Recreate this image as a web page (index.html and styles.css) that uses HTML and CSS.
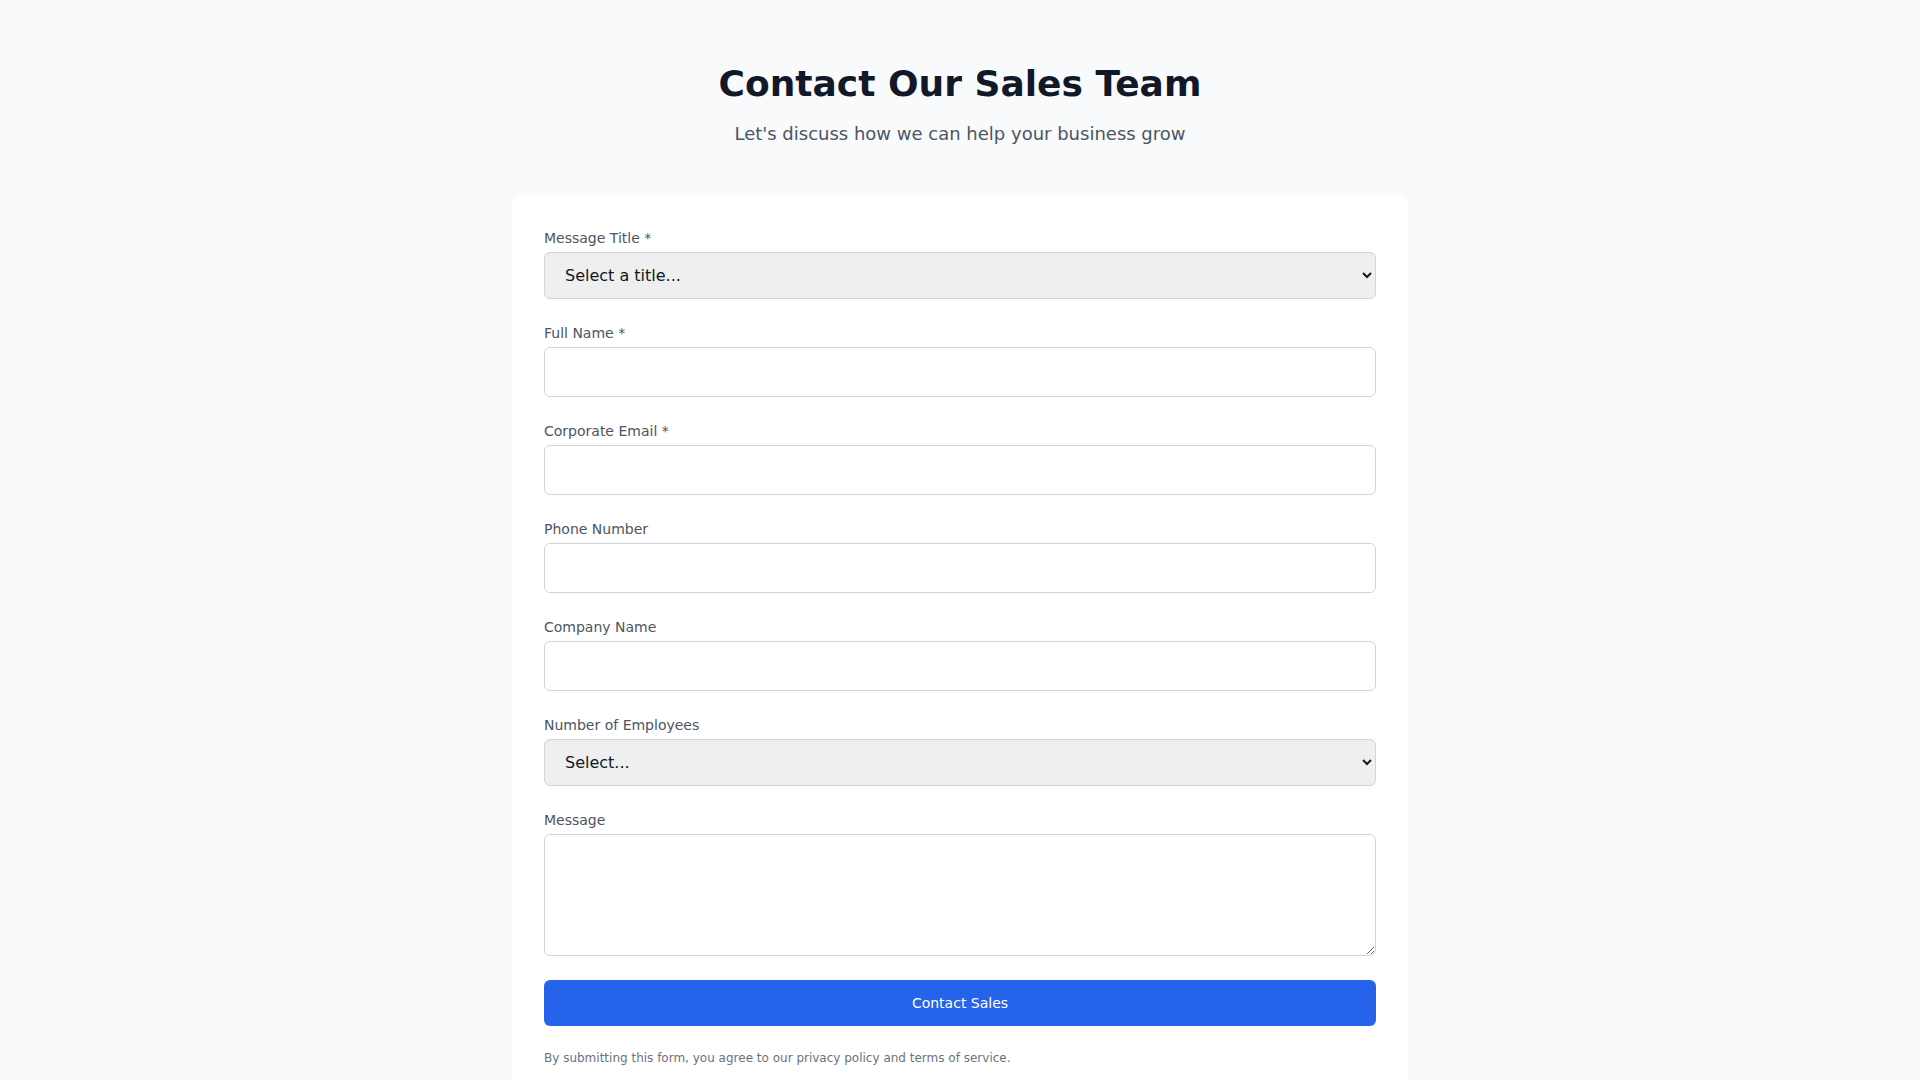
FILE: index.html
```html
<!DOCTYPE html>
<html lang="en">
<head>
    <meta charset="UTF-8">
    <meta name="viewport" content="width=device-width, initial-scale=1.0">
    <title>Contact Sales</title>
    <link rel="stylesheet" href="styles.css">
</head>
<body>
    <div class="page">
        <header class="intro">
            <h1>Contact Our Sales Team</h1>
            <p>Let's discuss how we can help your business grow</p>
        </header>

        <form class="card" id="salesForm">
            <div class="field">
                <label for="title">Message Title *</label>
                <select id="title" name="title" required>
                    <option value="">Select a title...</option>
                    <option>Product Demo</option>
                    <option>Pricing Inquiry</option>
                    <option>Partnership</option>
                </select>
            </div>

            <div class="field">
                <label for="name">Full Name *</label>
                <input type="text" id="name" name="name" required>
            </div>

            <div class="field">
                <label for="email">Corporate Email *</label>
                <input type="email" id="email" name="email" required>
            </div>

            <div class="field">
                <label for="phone">Phone Number</label>
                <input type="tel" id="phone" name="phone">
            </div>

            <div class="field">
                <label for="company">Company Name</label>
                <input type="text" id="company" name="company">
            </div>

            <div class="field">
                <label for="employees">Number of Employees</label>
                <select id="employees" name="employees">
                    <option value="">Select...</option>
                    <option>1-10</option>
                    <option>11-50</option>
                    <option>51-200</option>
                    <option>201-1000</option>
                    <option>1000+</option>
                </select>
            </div>

            <div class="field">
                <label for="message">Message</label>
                <textarea id="message" name="message" rows="4"></textarea>
            </div>

            <button type="submit">Contact Sales</button>

            <p class="note">By submitting this form, you agree to our privacy policy and terms of service.</p>
        </form>
    </div>
</body>
</html>
```

FILE: styles.css
```css
* { box-sizing: border-box; }
body { margin: 0; font-family: "DejaVu Sans", sans-serif; background-color: #f9fafb; color: #111827; }
.page { max-width: 896px; margin: 0 auto; padding: 64px 0; }
.intro { text-align: center; margin-bottom: 48px; }
.intro h1 { margin: 0 0 16px; font-size: 36px; line-height: 40px; font-weight: bold; color: #111827; }
.intro p { margin: 0; font-size: 18px; line-height: 28px; color: #4b5563; }
.card { background: white; padding: 32px; border-radius: 8px; box-shadow: 0 1px 2px rgba(0, 0, 0, 0.05); display: flex; flex-direction: column; gap: 24px; }
.field { display: flex; flex-direction: column; }
label { font-size: 14px; line-height: 20px; color: #4b5563; margin-bottom: 4px; }
input, select, textarea { width: 100%; padding: 12px 16px; border: 1px solid #d1d5db; border-radius: 6px; font-family: inherit; font-size: 16px; line-height: 24px; color: #111827; background: white; }
select { background-color: #efefef; height: 47px; padding: 0 16px; }
textarea { resize: vertical; display: block; }
button { width: 100%; padding: 12px; border: 1px solid transparent; border-radius: 6px; background-color: #2563eb; color: white; font-family: inherit; font-size: 14px; line-height: 20px; cursor: pointer; }
button:hover { background-color: #1d4ed8; }
.note { margin: 0; font-size: 12px; line-height: 16px; color: #6b7280; }
```
